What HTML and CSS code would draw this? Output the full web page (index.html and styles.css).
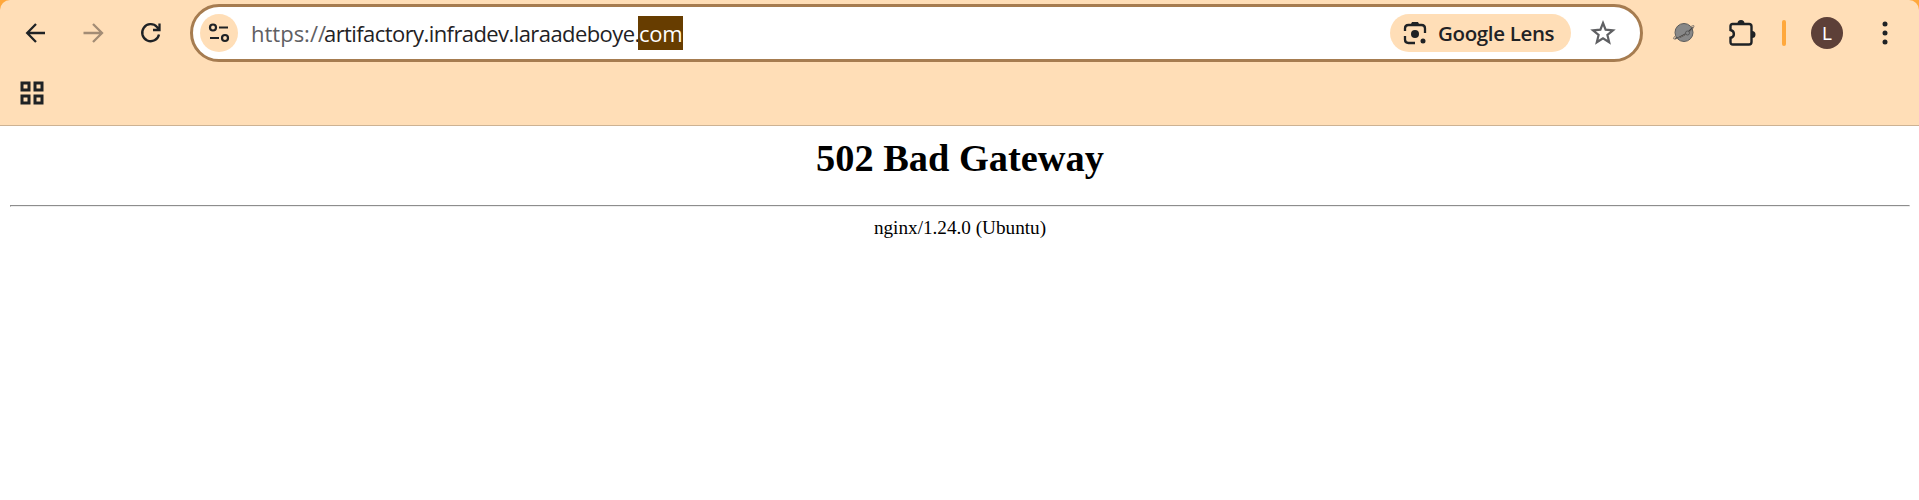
FILE: index.html
```html
<!DOCTYPE html>
<html lang="en">
<head>
<meta charset="utf-8">
<title>502 Bad Gateway</title>
<link rel="stylesheet" href="styles.css">
</head>
<body>
<header class="chrome">
  <div class="toolbar">
    <nav class="nav">
      <svg class="icon" viewBox="0 0 20 20"><path d="M19 10H1.500M10 1L1.200 10L10 19"/></svg>
      <svg class="icon muted" viewBox="0 0 20 20"><path d="M-.5 10H17.500M9 1L18 10L9 19"/></svg>
      <svg class="icon" viewBox="0 0 20 20"><path d="M17 11.500A8.500 8.500 0 1 1 15 4L17 6.500M17.500 .5V7H11"/></svg>
    </nav>
    <div class="omnibox">
      <span class="site">
        <svg viewBox="0 0 38 38"><circle cx="13" cy="13.500" r="3"/><path d="M19 13.500H28M10 24H19"/><circle cx="25" cy="24" r="3"/></svg>
      </span>
      <div class="url"><span class="scheme">https://</span><span class="host">artifactory.infradev.laraadeboye.</span><span class="selected">com</span></div>
      <div class="lens">
        <svg viewBox="0 0 24 24"><path d="M2 10V7.500Q2 4 5.500 4H18.500Q22 4 22 7.500V12M2 15V18.500Q2 22 5.500 22H12"/><path class="solid" d="M7 5L9 1H15L17 5Z"/><circle class="solid" cx="12" cy="13" r="4"/><circle class="solid" cx="20" cy="20" r="2.500"/></svg>
        <span>Google Lens</span>
      </div>
      <svg class="star" viewBox="0 0 26 26"><path d="M13 3L15.600 9.700L23 10.300L17.400 15L19.200 22.300L13 18.400L6.800 22.300L8.600 15L3 10.300L10.400 9.700Z"/></svg>
    </div>
    <div class="actions">
      <svg class="planet" viewBox="0 0 24 22"><circle cx="12" cy="10.500" r="9"/><path class="ring-shadow" d="M3 16.500Q12 15 21 5.500"/><path class="ring" d="M4 13C0 17 1 18 6 16C12 14 18 10 21 6C23 3 22 3 18 5"/><circle class="moon" cx="15.500" cy="11" r="2"/></svg>
      <svg class="puzzle" viewBox="0 0 28 28"><path d="M4.500 5H21Q23.500 5 23.500 7.500V23Q23.500 25.500 21 25.500H5Q2.500 25.500 2.500 23V18.800C7 18 7 12 2.500 11V7Q2.500 5 4.500 5Z"/><path class="solid" d="M9.500 4.500A3.500 3.500 0 0 1 16.500 4.500ZM24 12A3.500 3.500 0 0 1 24 19Z"/></svg>
      <i class="divider"></i>
      <span class="avatar">L</span>
      <svg class="more" viewBox="0 0 6 24"><circle cx="3" cy="3" r="2.500"/><circle cx="3" cy="12" r="2.500"/><circle cx="3" cy="21" r="2.500"/></svg>
    </div>
  </div>
  <div class="bookmarks">
    <svg viewBox="0 0 24 24"><path d="M2 2H9V9H2ZM15 2H22V9H15ZM2 15H9V22H2ZM15 15H22V22H15Z"/></svg>
  </div>
</header>
<main class="page">
  <h1>502 Bad Gateway</h1>
  <hr>
  <p>nginx/1.24.0 (Ubuntu)</p>
</main>
</body>
</html>
```
FILE: styles.css
```css
* { box-sizing: border-box; }
body { margin: 0; background: #ffa83c; height: 500px; overflow: hidden; }
svg { display: block; fill: none; stroke: #1f2225; flex: none; overflow: visible; }
.solid { fill: #1f2225; stroke: none; }
.chrome { height: 126px; background: #ffdeb7; border-bottom: 1px solid #cdb293; border-radius: 10px 10px 0 0; }
.toolbar { display: flex; height: 66px; align-items: center; }
.nav { display: flex; gap: 38px; width: 190px; padding-left: 25.500px; }
.icon { width: 20px; height: 20px; stroke-width: 2.3; }
.muted { stroke: #a38c75; }
.omnibox { width: 1453px; height: 58px; border: 3px solid #a67c50; border-radius: 29px; background: #fff; display: flex; align-items: center; padding-left: 7px; }
.site { width: 38px; height: 38px; border-radius: 50%; background: #ffdeb7; flex: none; }
.site svg { width: 38px; height: 38px; stroke-width: 2.2; }
.url { display: flex; margin-left: 13px; font: 22px/34px "Open Sans", sans-serif; white-space: nowrap; color: #1f2225; }
.scheme { width: 73px; color: #5f6063; }
.host { width: 314px; letter-spacing: -0.58px; }
.selected { width: 45px; padding-left: 1px; background: #673d00; color: #fff; letter-spacing: -0.2px; }
.lens { display: flex; align-items: center; gap: 11px; width: 181px; height: 38px; margin-left: auto; padding-left: 13px; border-radius: 19px; background: #ffdeb7; font: 600 20.500px/38px "Open Sans", sans-serif; letter-spacing: -0.35px; color: #1f2225; white-space: nowrap; }
.lens svg { width: 24px; height: 24px; stroke-width: 2.3; }
.star { width: 26px; height: 26px; margin: 0 24px 0 19px; stroke: #5f6063; stroke-width: 2.2; }
.actions { display: flex; align-items: center; }
.planet { width: 24px; height: 22px; margin-left: 29px; stroke: #5a5a5a; stroke-width: 1; }
.planet circle { fill: #888; }
.ring-shadow { stroke: #444; stroke-width: 1.6; }
.ring { stroke: #77706a; }
.puzzle { width: 28px; height: 28px; margin-left: 32px; stroke-width: 2.4; }
.divider { width: 4px; height: 26px; margin-left: 26px; border-radius: 2px; background: #ffa83c; }
.avatar { width: 32px; height: 32px; margin-left: 25px; border-radius: 50%; background: #5d4038; color: #fff; font: 18px/33px Roboto, sans-serif; text-align: center; }
.more { width: 6px; height: 24px; margin-left: 39px; fill: #1f2225; stroke: none; }
.bookmarks { padding: 15px 0 0 20px; }
.bookmarks svg { width: 24px; height: 24px; stroke-width: 3; }
.page { height: 374px; padding: 9px 9px 0 10px; background: #fff; color: #000; font: 19.200px "Liberation Serif", serif; text-align: center; }
h1 { margin: 0; font-size: 38.400px; line-height: 46px; }
hr { margin: 24px 0 10px; height: 2px; border: 1px solid; border-color: #8d8d8d #eee #eee #8d8d8d; }
.page p { margin: 0; line-height: 22px; }
```
